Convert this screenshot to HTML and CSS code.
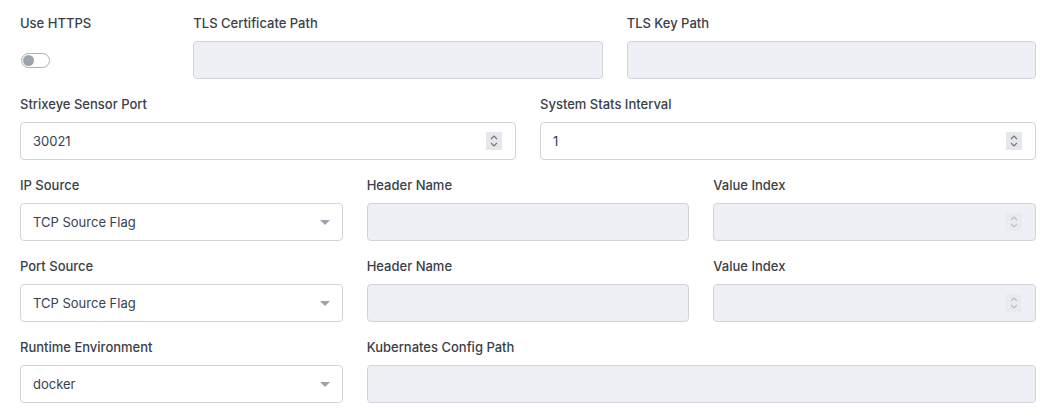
FILE: index.html
```html
<!DOCTYPE html>
<html>
<head>
<meta charset="utf-8">
<link rel="stylesheet" href="styles.css">
</head>
<body>
<div class="form">
  <div class="row">
    <div class="field span2">
      <div class="label">Use HTTPS</div>
      <div class="toggle-wrap"><span class="toggle"><span class="knob"></span></span></div>
    </div>
    <div class="field span5">
      <div class="label">TLS Certificate Path</div>
      <div class="box disabled"></div>
    </div>
    <div class="field span5">
      <div class="label">TLS Key Path</div>
      <div class="box disabled"></div>
    </div>
  </div>
  <div class="row">
    <div class="field span6">
      <div class="label">Strixeye Sensor Port</div>
      <div class="box"><span class="value">30021</span>
        <span class="spin"><svg width="10" height="14" viewBox="0 0 10 14"><path d="M2 5 L5 2 L8 5 M2 9 L5 12 L8 9" fill="none" stroke="#6b7280" stroke-width="1.1"/></svg></span>
      </div>
    </div>
    <div class="field span6">
      <div class="label">System Stats Interval</div>
      <div class="box"><span class="value">1</span>
        <span class="spin"><svg width="10" height="14" viewBox="0 0 10 14"><path d="M2 5 L5 2 L8 5 M2 9 L5 12 L8 9" fill="none" stroke="#6b7280" stroke-width="1.1"/></svg></span>
      </div>
    </div>
  </div>
  <div class="row">
    <div class="field span4">
      <div class="label">IP Source</div>
      <div class="box"><span class="value">TCP Source Flag</span><span class="caret"></span></div>
    </div>
    <div class="field span4">
      <div class="label">Header Name</div>
      <div class="box disabled"></div>
    </div>
    <div class="field span4">
      <div class="label">Value Index</div>
      <div class="box disabled">
        <span class="spin light"><svg width="10" height="14" viewBox="0 0 10 14"><path d="M2 5 L5 2 L8 5 M2 9 L5 12 L8 9" fill="none" stroke="#b8bcc4" stroke-width="1.1"/></svg></span>
      </div>
    </div>
  </div>
  <div class="row">
    <div class="field span4">
      <div class="label">Port Source</div>
      <div class="box"><span class="value">TCP Source Flag</span><span class="caret"></span></div>
    </div>
    <div class="field span4">
      <div class="label">Header Name</div>
      <div class="box disabled"></div>
    </div>
    <div class="field span4">
      <div class="label">Value Index</div>
      <div class="box disabled">
        <span class="spin light"><svg width="10" height="14" viewBox="0 0 10 14"><path d="M2 5 L5 2 L8 5 M2 9 L5 12 L8 9" fill="none" stroke="#b8bcc4" stroke-width="1.1"/></svg></span>
      </div>
    </div>
  </div>
  <div class="row">
    <div class="field span4">
      <div class="label">Runtime Environment</div>
      <div class="box"><span class="value">docker</span><span class="caret"></span></div>
    </div>
    <div class="field span8">
      <div class="label">Kubernates Config Path</div>
      <div class="box disabled"></div>
    </div>
  </div>
</div>
</body>
</html>
```
FILE: styles.css
```css
html, body {
  margin: 0;
  padding: 0;
  background: #ffffff;
}
body {
  font-family: Inter, "Noto Sans", "Liberation Sans", sans-serif;
  color: #374151;
}
.form {
  padding: 13px 20px 0 20px;
  display: flex;
  flex-direction: column;
  gap: 15px;
}
.row {
  display: grid;
  grid-template-columns: repeat(12, 1fr);
  column-gap: 24px;
}
.span2 { grid-column: span 2; }
.span4 { grid-column: span 4; }
.span5 { grid-column: span 5; }
.span6 { grid-column: span 6; }
.span8 { grid-column: span 8; }
.field {
  display: flex;
  flex-direction: column;
}
.label {
  font-size: 13px;
  font-weight: 500;
  line-height: 20px;
  height: 20px;
  margin-bottom: 8px;
  color: #3a3f47;
}
.box {
  box-sizing: border-box;
  height: 38px;
  border: 1px solid #d1d5db;
  border-radius: 4px;
  background: #ffffff;
  display: flex;
  align-items: center;
  padding: 0 13px 0 12px;
  font-size: 13px;
  color: #374151;
}
.box.disabled {
  background: #eef0f5;
}
.value {
  flex: 1;
}
.spin {
  margin-left: auto;
  width: 16px;
  height: 18px;
  background: #e5e7eb;
  display: flex;
  align-items: center;
  justify-content: center;
}
.spin.light {
  background: #e9ebf0;
}
.caret {
  margin-left: auto;
  margin-right: -1px;
  width: 0;
  height: 0;
  border-left: 5px solid transparent;
  border-right: 5px solid transparent;
  border-top: 5px solid #9ca3af;
}
.toggle-wrap {
  height: 38px;
  display: flex;
  align-items: center;
}
.toggle {
  box-sizing: border-box;
  width: 29px;
  height: 15px;
  border: 1px solid #a8adb6;
  border-radius: 8px;
  background: #ffffff;
  display: flex;
  align-items: center;
  padding-left: 1px;
  margin-left: 1px;
}
.knob {
  width: 11px;
  height: 11px;
  border-radius: 50%;
  background: #9ca3af;
}
```
